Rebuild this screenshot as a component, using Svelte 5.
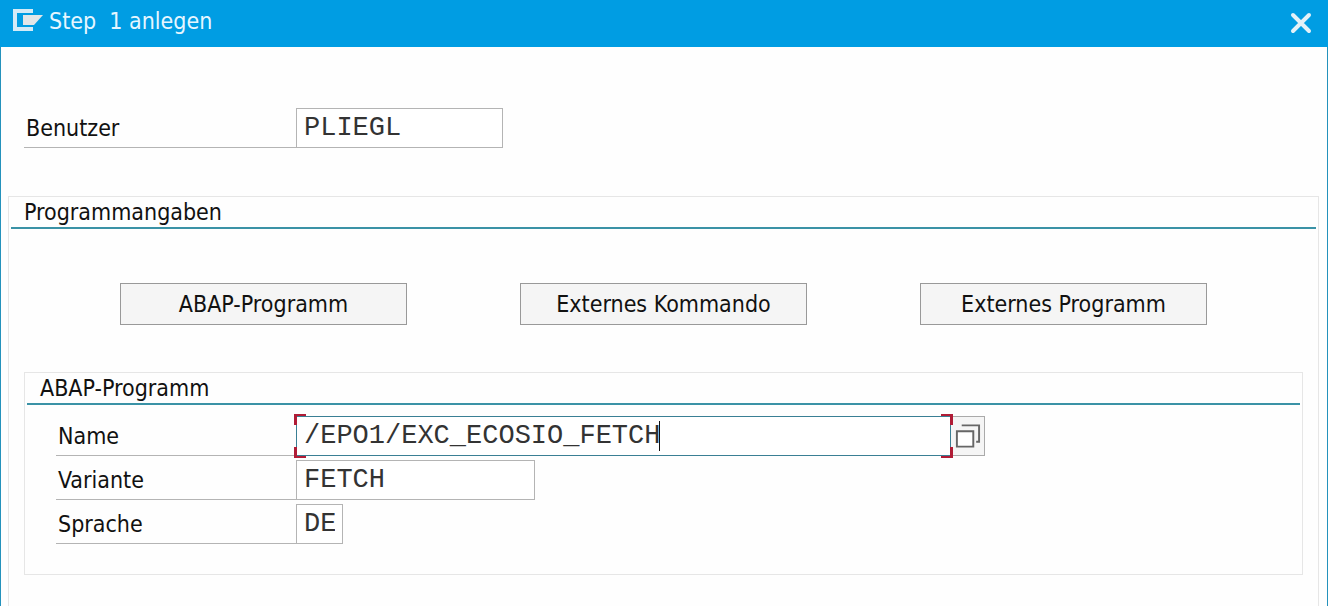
<script>
  let user = "PLIEGL";
  let name = "/EPO1/EXC_ECOSIO_FETCH";
  let variant = "FETCH";
  let language = "DE";

  const stepTypes = ["ABAP-Programm", "Externes Kommando", "Externes Programm"];
</script>

<div class="dialog">
  <header class="titlebar">
    <svg class="window-icon" viewBox="0 0 32 24" width="32" height="24" aria-hidden="true">
      <path d="M21 2H3v18h18" fill="none" stroke="#d3ebf7" stroke-width="4" />
      <path d="M11 6H31L22 16H11z" fill="#e2e6e8" />
    </svg>
    <h1>Step&nbsp; 1 anlegen</h1>
    <button class="close" aria-label="Schließen">
      <svg viewBox="0 0 22 22" width="22" height="22" aria-hidden="true">
        <path
          d="M3 3L19 19M19 3L3 19"
          stroke="#e3f1f8"
          stroke-width="4"
          stroke-linecap="round"
        />
      </svg>
    </button>
  </header>

  <main>
    <div class="row user-row">
      <label for="user">Benutzer</label>
      <input id="user" class="user" bind:value={user} />
    </div>

    <section class="group outer">
      <h2>Programmangaben</h2>

      <div class="step-types">
        {#each stepTypes as type}
          <button class="step-type">{type}</button>
        {/each}
      </div>

      <section class="group inner">
        <h2>ABAP-Programm</h2>

        <div class="fields">
          <div class="row">
            <label for="name">Name</label>
            <div class="focus-field">
              <input id="name" bind:value={name} />
              <span class="caret" style="--chars: {name.length}"></span>
              <span class="corner top left"></span>
              <span class="corner top right"></span>
              <span class="corner bottom left"></span>
              <span class="corner bottom right"></span>
            </div>
            <button class="value-help" aria-label="Wertehilfe">
              <svg viewBox="0 0 28 26" width="28" height="26" aria-hidden="true">
                <path d="M3 8H20V24H3z" fill="#fff" />
                <path
                  d="M3 8H20V24H3zM8 2H26V19H23"
                  fill="none"
                  stroke="#666"
                  stroke-width="2"
                />
              </svg>
            </button>
          </div>
          <div class="row">
            <label for="variant">Variante</label>
            <input id="variant" class="variant" bind:value={variant} />
          </div>
          <div class="row">
            <label for="language">Sprache</label>
            <input id="language" class="language" maxlength="2" bind:value={language} />
          </div>
        </div>
      </section>
    </section>
  </main>
</div>

<style>
  :global(body) {
    margin: 0;
    background: #fefefe;
  }

  .dialog {
    display: flex;
    flex-direction: column;
    box-sizing: border-box;
    min-height: 100vh;
    border: 1px solid #2492bc;
    border-width: 0 1px;
    color: #111;
    font-family: "DejaVu Sans Condensed", Tahoma, sans-serif;
    font-size: 23px;
    line-height: 30px;
  }

  .titlebar {
    display: flex;
    align-items: center;
    box-sizing: border-box;
    height: 47px;
    margin: 0 -1px;
    padding: 0 16px 6px 12px;
    background: #009de3;
    color: #e6f6ff;
  }

  h1,
  h2 {
    margin: 0;
    font-size: inherit;
    font-weight: normal;
  }

  .window-icon {
    margin-right: 5px;
  }

  .close {
    display: flex;
    margin-left: auto;
    padding: 5px 0 0;
    border: none;
    background: none;
  }

  main {
    display: flex;
    flex: 1;
    flex-direction: column;
    padding: 61px 8px 0 7px;
  }

  .row {
    display: flex;
    height: 40px;
  }

  .user-row {
    margin: 0 0 48px 16px;
  }

  label {
    box-sizing: border-box;
    width: 240px;
    padding: 5px 2px 0;
    border-bottom: 1px solid #b4b4b4;
  }

  .user-row label {
    width: 272px;
  }

  input {
    box-sizing: border-box;
    height: 40px;
    padding: 0 7px;
    border: 1px solid #b4b4b4;
    border-radius: 0;
    outline: none;
    background: #fff;
    color: #333;
    font-family: "Liberation Mono", "Courier New", monospace;
    font-size: 27px;
  }

  .user {
    width: 207px;
  }

  .variant {
    width: 239px;
  }

  .language {
    width: 47px;
  }

  .group {
    border: 1px solid #e6e6e6;
  }

  h2 {
    margin: 0 2px;
    padding-left: 13px;
    border-bottom: 2px solid #3a92a6;
  }

  .outer {
    flex: 1;
    border-bottom: none;
  }

  .step-types {
    display: flex;
    gap: 113px;
    padding: 54px 0 47px 111px;
  }

  .step-type {
    width: 287px;
    height: 42px;
    padding: 0;
    border: 1px solid #999;
    background: #f5f5f5;
    color: #111;
    font: inherit;
  }

  .inner {
    margin: 0 15px;
  }

  .fields {
    display: flex;
    flex-direction: column;
    gap: 4px;
    padding: 11px 0 30px 31px;
  }

  .focus-field {
    position: relative;
    width: 655px;
  }

  .focus-field input {
    width: 100%;
    border-color: #3a7f94;
  }

  /* text cursor after the last character */
  .caret {
    position: absolute;
    top: 5px;
    left: calc(7px + var(--chars) * 1ch);
    width: 1px;
    height: 30px;
    background: #111;
    font-family: "Liberation Mono", "Courier New", monospace;
    font-size: 27px;
  }

  .corner {
    position: absolute;
    width: 9px;
    height: 9px;
    border: 0 solid #b01c36;
  }

  .top {
    top: -2px;
    border-top-width: 2px;
  }

  .bottom {
    bottom: -2px;
    border-bottom-width: 2px;
  }

  .left {
    left: -2px;
    border-left-width: 3px;
  }

  .right {
    right: -2px;
    border-right-width: 3px;
  }

  .value-help {
    display: flex;
    align-items: center;
    box-sizing: border-box;
    width: 34px;
    padding: 0 3px;
    border: 1px solid #aaa;
    border-left: none;
    background: #f5f5f5;
  }
</style>
